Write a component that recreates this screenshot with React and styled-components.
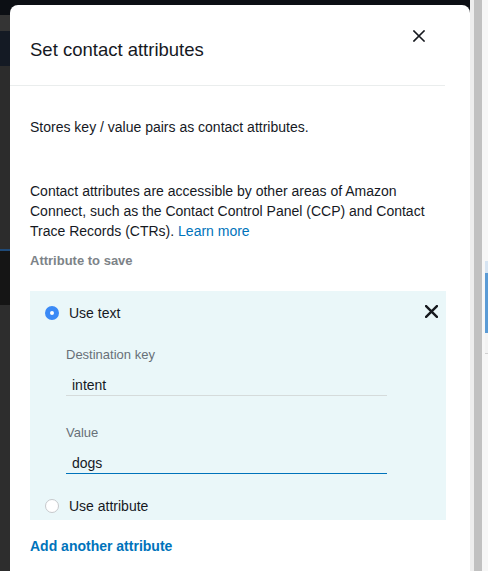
import styled, { createGlobalStyle } from "styled-components";

const GlobalStyle = createGlobalStyle`
  html, body {
    margin: 0;
    padding: 0;
  }
  body {
    background: #1b1d21;
    font-family: "Liberation Sans", Arial, sans-serif;
    color: #16191f;
  }
`;

const Radio = ({ checked, label }) => (
  <StRadioRow>
    <StRadio checked={checked} />
    <span>{label}</span>
  </StRadioRow>
);

const Field = ({ label, value, active }) => (
  <StField>
    <StFieldLabel>{label}</StFieldLabel>
    <StInput active={active}>{value}</StInput>
  </StField>
);

const CloseIcon = ({ size = 12, stroke = 1.6 }) => (
  <svg width={size} height={size} viewBox="0 0 12 12">
    <path
      d="M1 1 L11 11 M11 1 L1 11"
      stroke="#16191f"
      strokeWidth={stroke}
      strokeLinecap="square"
      fill="none"
    />
  </svg>
);

const App = () => {
  return (
    <>
      <GlobalStyle />
      <StPage>
        <StStage>
          <StModal>
            <StHeader>
              <StTitle>Set contact attributes</StTitle>
              <StClose>
                <CloseIcon />
              </StClose>
            </StHeader>
            <StBody>
              <StText>Stores key / value pairs as contact attributes.</StText>
              <StParagraph>
                Contact attributes are accessible by other areas of Amazon
                Connect, such as the Contact Control Panel (CCP) and Contact
                Trace Records (CTRs). <StLink>Learn more</StLink>
              </StParagraph>
              <StSection>Attribute to save</StSection>
              <StAttrBox>
                <StBoxHead>
                  <Radio checked label="Use text" />
                  <StRemove>
                    <CloseIcon size={13} stroke={2.2} />
                  </StRemove>
                </StBoxHead>
                <StFields>
                  <Field label="Destination key" value="intent" />
                  <Field label="Value" value="dogs" active />
                </StFields>
                <Radio label="Use attribute" />
              </StAttrBox>
              <StAddLink>Add another attribute</StAddLink>
            </StBody>
          </StModal>
        </StStage>
        <StTrack>
          <StThumb />
        </StTrack>
        <StPeek>
          <StPeekPanel />
        </StPeek>
      </StPage>
    </>
  );
};

export default App;

const StPage = styled.div`
  display: flex;
  width: 488px;
  height: 571px;
  overflow: hidden;
`;

const StStage = styled.div`
  width: 470px;
  flex-shrink: 0;
  padding: 5px 0 0 10px;
  box-sizing: border-box;
  background: linear-gradient(
    to bottom,
    #0c0f14 0px,
    #0c0f14 15px,
    #343434 15px,
    #343434 31px,
    #141a24 31px,
    #141a24 66px,
    #2c2c2c 66px,
    #2c2c2c 249px,
    #1f4a78 249px,
    #1f4a78 251px,
    #151515 251px,
    #151515 305px,
    #2d2d2d 305px
  );
`;

const StModal = styled.div`
  height: 100%;
  background: #fff;
  border-radius: 8px 8px 0 0;
`;

const StHeader = styled.div`
  display: flex;
  justify-content: space-between;
  align-items: flex-start;
  height: 80px;
  margin-right: 25px;
  padding: 0 20px 0 20px;
  border-bottom: 1px solid #eaeded;
`;

const StTitle = styled.h2`
  margin: 33px 0 0;
  font-size: 18.5px;
  line-height: 24px;
  font-weight: 400;
  color: #16191f;
`;

const StClose = styled.div`
  display: flex;
  margin-top: 25px;
`;

const StBody = styled.div`
  padding: 31px 24px 0 20px;
`;

const StText = styled.p`
  margin: 0;
  font-size: 14px;
  line-height: 20px;
`;

const StParagraph = styled(StText)`
  margin-top: 44px;
`;

const StLink = styled.a`
  color: #0073bb;
  cursor: pointer;
`;

const StSection = styled.div`
  margin-top: 10px;
  font-size: 13px;
  line-height: 20px;
  font-weight: 700;
  color: #7d8388;
`;

const StAttrBox = styled.div`
  margin-top: 20px;
  padding: 12px 8px 4px 15px;
  background: #eaf7f9;
`;

const StBoxHead = styled.div`
  display: flex;
  justify-content: space-between;
  align-items: center;
`;

const StRemove = styled.div`
  display: flex;
  margin-top: -4px;
`;

const StRadioRow = styled.label`
  display: flex;
  align-items: center;
  gap: 10px;
  font-size: 14px;
  line-height: 20px;
  color: #16191f;
`;

const StRadio = styled.span`
  box-sizing: border-box;
  width: 14px;
  height: 14px;
  border-radius: 50%;
  background: #fff;
  border: ${(props) =>
    props.checked ? "5px solid #3b8af6" : "1px solid #c6c9cc"};
`;

const StFields = styled.div`
  display: flex;
  flex-direction: column;
  gap: 27px;
  padding: 22px 0 22px 21px;
`;

const StField = styled.div`
  display: flex;
  flex-direction: column;
  gap: 4px;
  width: 321px;
`;

const StFieldLabel = styled.div`
  font-size: 13px;
  line-height: 20px;
  color: #687078;
`;

const StInput = styled.div`
  padding: 6px 6px 0;
  font-size: 14px;
  line-height: 20px;
  color: #16191f;
  border-bottom: 1px solid ${(props) => (props.active ? "#0073bb" : "#d5dbdb")};
`;

const StAddLink = styled.a`
  display: block;
  margin-top: 16px;
  font-size: 14px;
  line-height: 20px;
  font-weight: 700;
  color: #0073bb;
`;

const StTrack = styled.div`
  width: 12px;
  flex-shrink: 0;
  padding-left: 4px;
  box-sizing: border-box;
  background: #eeeeee;
`;

const StThumb = styled.div`
  width: 8px;
  height: 100%;
  background: #c1c1c1;
`;

const StPeek = styled.div`
  flex: 1;
  padding: 261px 0 0 3px;
  background: #f7f7f7;
`;

const StPeekPanel = styled.div`
  height: 60px;
  border-top: 12px solid #d6e4f2;
  background: #5b9bd5;
  border-bottom: 20px solid #f3f3f3;
  box-shadow: 0 1px 0 #d0d0d0;
`;
